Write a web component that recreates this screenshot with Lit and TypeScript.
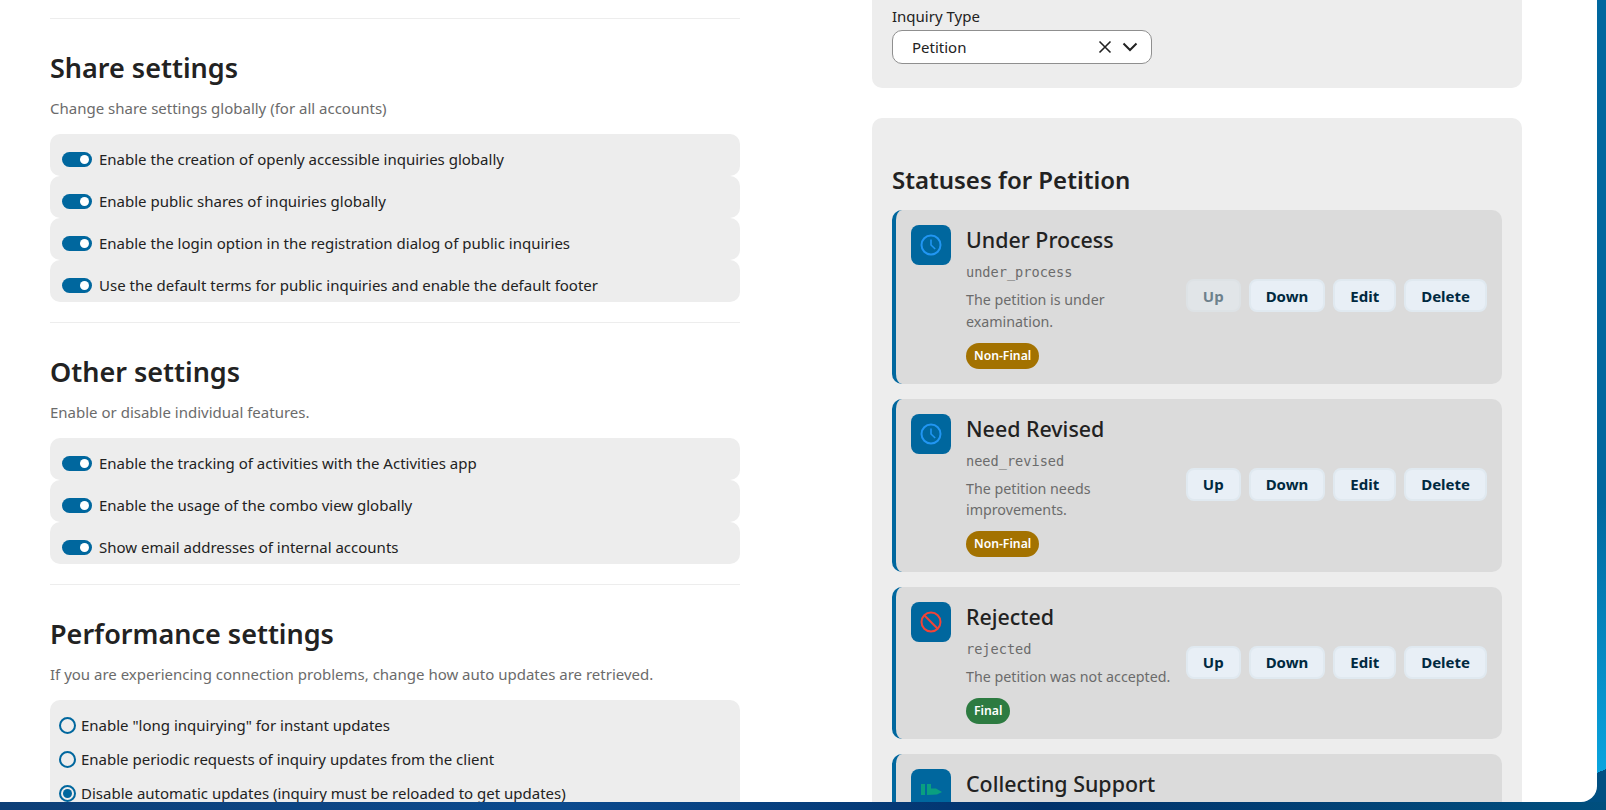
import { LitElement, html, css, svg } from "lit";
import { customElement } from "lit/decorators.js";

const clock = svg`<circle cx="12" cy="12" r="9.5" fill="none" stroke="#2196f3" stroke-width="2"/><path d="M12 6.5V12l4.2 4" fill="none" stroke="#2196f3" stroke-width="1.6"/>`;
const ban = svg`<circle cx="12" cy="12" r="9.5" fill="none" stroke="#f44336" stroke-width="2"/><path d="M5.3 5.3l13.4 13.4" fill="none" stroke="#f44336" stroke-width="2"/>`;
const flag = svg`<path d="M2 7h4v11H2zM8 7h4v4.5h5l6 3.5-5 2.5-10 .5z" fill="#0a9f80"/>`;

interface Status { title: string; code?: string; desc?: string; badge?: string; icon: unknown; upDisabled?: boolean; }

const statuses: Status[] = [
  { title: "Under Process", code: "under_process", desc: "The petition is under examination.", badge: "Non-Final", icon: clock, upDisabled: true },
  { title: "Need Revised", code: "need_revised", desc: "The petition needs improvements.", badge: "Non-Final", icon: clock },
  { title: "Rejected", code: "rejected", desc: "The petition was not accepted.", badge: "Final", icon: ban },
  { title: "Collecting Support", icon: flag },
];

@customElement("app-root")
export class AppRoot extends LitElement {
  static styles = css`
    :host {
      display: block;
      width: 1606px;
      height: 810px;
      overflow: hidden;
      font-family: "Noto Sans", sans-serif;
      font-size: 15px;
      color: #222;
      background:
        linear-gradient(158deg, transparent 0 97.2%, #004f82 97.2%),
        linear-gradient(180deg, #00679e 0%, #00679e 62%, #0aa6e0 96%);
      position: relative;
    }
    .bar {
      position: absolute;
      left: 0;
      right: 0;
      bottom: 0;
      height: 8px;
      background: linear-gradient(90deg, #0d3f77 0%, #0b4a8e 35%, #01326b 65%, #004f7e 100%);
    }
    .main {
      position: relative;
      z-index: 1;
      width: 1597px;
      height: 802px;
      background: #fff;
      border-radius: 0 0 16px 0;
      overflow: hidden;
      box-sizing: border-box;
      padding: 0 75px 0 50px;
      display: grid;
      grid-template-columns: 690px 650px;
      justify-content: space-between;
      align-items: start;
    }
    .left { padding-top: 18px; }
    hr {
      border: 0;
      height: 1px;
      background: #ededed;
      margin: 0;
    }
    h2 {
      font-size: 27px;
      font-weight: 600;
      line-height: 40px;
      margin: 29px 0 0;
      color: #222;
    }
    .hint {
      color: #6b6b6b;
      line-height: 24px;
      margin: 8px 0 14px;
    }
    .group { margin-bottom: 20px; }
    .toggle-row {
      background: #ededed;
      border-radius: 10px;
      height: 42px;
      box-sizing: border-box;
      padding: 13px 12px 5px;
      display: flex;
      align-items: center;
      gap: 7px;
      line-height: 24px;
    }
    .switch {
      width: 30px;
      height: 15px;
      border-radius: 8px;
      background: #00679e;
      display: flex;
      align-items: center;
      justify-content: flex-end;
      padding-right: 3px;
      box-sizing: border-box;
      flex: none;
    }
    .switch i {
      width: 9px;
      height: 9px;
      border-radius: 50%;
      background: #fff;
      display: block;
    }
    .radio-box {
      background: #ededed;
      border-radius: 10px;
      padding: 8px 8.5px 20px;
    }
    .radio-row {
      height: 34px;
      display: flex;
      align-items: center;
      gap: 5.5px;
    }
    .radio {
      width: 17px;
      height: 17px;
      border: 2px solid #00679e;
      border-radius: 50%;
      box-sizing: border-box;
      flex: none;
      display: flex;
      align-items: center;
      justify-content: center;
    }
    .radio i {
      width: 9px;
      height: 9px;
      border-radius: 50%;
      background: #00679e;
      display: block;
    }
    .panel {
      background: #ededed;
      border-radius: 10px;
      padding: 0 20px;
    }
    .panel.first {
      border-radius: 0 0 10px 10px;
      height: 88px;
      box-sizing: border-box;
      padding-top: 4px;
      margin-bottom: 30px;
    }
    .label { line-height: 24px; height: 26px; }
    .select {
      width: 260px;
      height: 34px;
      background: #fff;
      border: 1px solid #8f8f8f;
      border-radius: 10px;
      box-sizing: border-box;
      display: flex;
      align-items: center;
      padding: 0 13px 0 19px;
    }
    .select span { flex: 1; }
    .select svg { display: block; flex: none; }
    .select .x { margin-right: 10px; }
    h3.section {
      font-size: 24px;
      font-weight: 600;
      line-height: 34px;
      margin: 0 0 13px;
      padding-top: 45px;
    }
    .card {
      background: #dbdbdb;
      border-left: 4px solid #00679e;
      border-radius: 10px;
      padding: 15px;
      display: flex;
      gap: 15px;
      align-items: center;
      margin-bottom: 15px;
    }
    .icon {
      width: 40px;
      height: 40px;
      background: #00679e;
      border-radius: 8px;
      display: flex;
      align-items: center;
      justify-content: center;
      flex: none;
      align-self: flex-start;
    }
    .info { flex: 1; min-width: 0; align-self: flex-start; }
    .title {
      font-size: 21.4px;
      font-weight: 500;
      line-height: 30px;
      color: #222;
    }
    .code {
      font-family: "DejaVu Sans Mono", monospace;
      font-size: 13.6px;
      color: #6b6b6b;
      line-height: 20px;
      margin-top: 7px;
    }
    .desc {
      color: #6b6b6b;
      font-size: 14.25px;
      line-height: 21.5px;
      margin-top: 7px;
    }
    .badge {
      display: inline-block;
      height: 26px;
      line-height: 26px;
      border-radius: 13px;
      padding: 0 8px;
      font-size: 12.2px;
      font-weight: 600;
      color: #fff;
      margin-top: 10.6px;
      vertical-align: top;
    }
    .badge.nf { background: #a37200; }
    .badge.f { background: #2d7b41; }
    .actions { display: flex; gap: 8px; flex: none; margin-bottom: 2px; }
    .btn {
      height: 33px;
      box-sizing: border-box;
      border: 2px solid #e0e9f0;
      background: #e8eff6;
      border-radius: 8px;
      color: #00293f;
      font-weight: 700;
      font-size: 15px;
      padding: 0 15px;
      display: flex;
      align-items: center;
    }
    .btn.off { opacity: 0.5; }
  `;

  private toggleRows(items: string[]) {
    return html`<div class="group">
      ${items.map((t) => html`<div class="toggle-row"><span class="switch"><i></i></span><span>${t}</span></div>`)}
    </div>`;
  }

  render() {
    return html`
      <div class="main">
        <div class="left">
          <hr />
          <h2>Share settings</h2>
          <div class="hint">Change share settings globally (for all accounts)</div>
          ${this.toggleRows([
            "Enable the creation of openly accessible inquiries globally",
            "Enable public shares of inquiries globally",
            "Enable the login option in the registration dialog of public inquiries",
            "Use the default terms for public inquiries and enable the default footer",
          ])}
          <hr />
          <h2>Other settings</h2>
          <div class="hint">Enable or disable individual features.</div>
          ${this.toggleRows([
            "Enable the tracking of activities with the Activities app",
            "Enable the usage of the combo view globally",
            "Show email addresses of internal accounts",
          ])}
          <hr />
          <h2>Performance settings</h2>
          <div class="hint">If you are experiencing connection problems, change how auto updates are retrieved.</div>
          <div class="radio-box">
            <div class="radio-row"><span class="radio"></span><span>Enable "long inquirying" for instant updates</span></div>
            <div class="radio-row"><span class="radio"></span><span>Enable periodic requests of inquiry updates from the client</span></div>
            <div class="radio-row"><span class="radio"><i></i></span><span>Disable automatic updates (inquiry must be reloaded to get updates)</span></div>
          </div>
        </div>
        <div class="right">
          <div class="panel first">
            <div class="label">Inquiry Type</div>
            <div class="select">
              <span>Petition</span>
              <svg class="x" width="14" height="14" viewBox="0 0 14 14"><path d="M1.5 1.5l11 11M12.5 1.5l-11 11" stroke="#222" stroke-width="1.6" fill="none"/></svg>
              <svg width="16" height="10" viewBox="0 0 16 10"><path d="M1.5 1.5L8 8l6.5-6.5" stroke="#222" stroke-width="2" fill="none"/></svg>
            </div>
          </div>
          <div class="panel">
            <h3 class="section">Statuses for Petition</h3>
            ${statuses.map((s) => this.card(s))}
          </div>
        </div>
      </div>
      <div class="bar"></div>
    `;
  }

  private card(s: Status) {
    return html`<div class="card">
      <div class="icon"><svg width="24" height="24" viewBox="0 0 24 24">${s.icon}</svg></div>
      <div class="info">
        <div class="title">${s.title}</div>
        ${s.code ? html`<div class="code">${s.code}</div>` : ""}
        ${s.desc ? html`<div class="desc">${s.desc}</div>` : ""}
        ${s.badge ? html`<span class="badge ${s.badge === "Final" ? "f" : "nf"}">${s.badge}</span>` : ""}
      </div>
      ${s.code
        ? html`<div class="actions">
            <div class="btn ${s.upDisabled ? "off" : ""}">Up</div>
            <div class="btn">Down</div>
            <div class="btn">Edit</div>
            <div class="btn">Delete</div>
          </div>`
        : ""}
    </div>`;
  }
}
